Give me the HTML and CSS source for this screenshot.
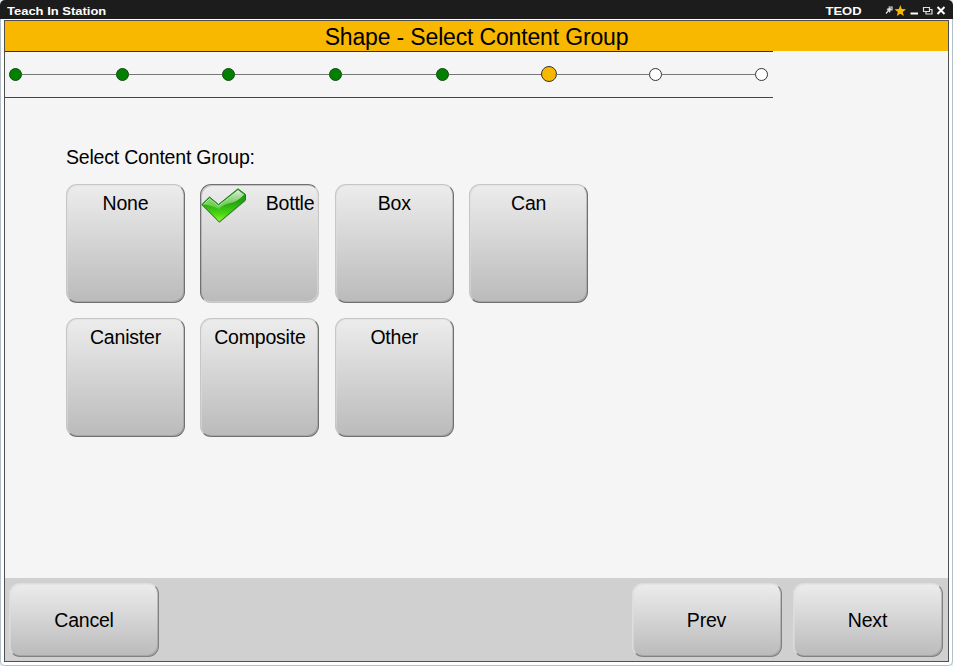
FILE: index.html
```html
<!DOCTYPE html>
<html lang="en">
<head>
<meta charset="utf-8">
<title>Teach In Station</title>
<link rel="stylesheet" href="styles.css">
</head>
<body>
<div class="window">
  <header class="titlebar">
    <span class="app-name">Teach In Station</span>
    <span class="station">TEOD</span>
    <svg class="controls" width="66" height="19" viewBox="0 0 66 19">
      <path d="M3.500 9L6 8 6.500 7 9 10 7.500 10.500 7 13z" fill="#ddd"/>
      <path d="M5.500 7h3.500v3.500M5.500 10.500l-2.500 3" fill="none" stroke="#ddd" stroke-width="1.200"/>
      <path d="M17.300 5l1.500 3.900 4.200.3-3.200 2.700 1 4.100-3.500-2.200-3.500 2.200 1-4.100-3.200-2.700 4.200-.3z" fill="#f8b800"/>
      <path d="M27.500 13.500h7.500" stroke="#fff" stroke-width="2"/>
      <path d="M40.500 7.500h6v4h-6zM43 11.500v2.500h6v-4.500h-2.500" fill="none" stroke="#ddd" stroke-width="1.200"/>
      <path d="M54.500 7l7 7M61.500 7l-7 7" stroke="#fff" stroke-width="2"/>
    </svg>
  </header>
  <div class="frame">
    <main class="screen">
      <h1 class="heading">Shape - Select Content Group</h1>
      <div class="progress">
        <i class="step done"></i><i class="line"></i><i class="step done"></i><i class="line"></i><i class="step done"></i><i class="line"></i><i class="step done"></i><i class="line"></i><i class="step done"></i><i class="line"></i><i class="step current"></i><i class="line"></i><i class="step"></i><i class="line"></i><i class="step"></i>
      </div>
      <section class="content">
        <h2 class="label">Select Content Group:</h2>
        <div class="tiles">
          <button class="btn tile">None</button>
          <button class="btn tile selected">
            <svg class="check" width="46" height="36" viewBox="0 0 46 36">
              <defs>
                <linearGradient id="leaf" x1="0" y1="0" x2="0" y2="1">
                  <stop offset="0" stop-color="#258b20"/>
                  <stop offset=".4" stop-color="#24a512"/>
                  <stop offset=".75" stop-color="#48d512"/>
                  <stop offset="1" stop-color="#9cf535"/>
                </linearGradient>
                <linearGradient id="gloss" x1="0" y1="0" x2="0" y2="1">
                  <stop offset="0" stop-color="#fff" stop-opacity=".85"/>
                  <stop offset="1" stop-color="#a0e878" stop-opacity=".4"/>
                </linearGradient>
              </defs>
              <path d="M1 17.500L8.500 10.500 18 18.500 37 2 45 8.500V13L18.500 35z" fill="#555" opacity=".35"/>
              <path d="M.8 16.500L8.500 9 17.500 16.500 37 .8 44.500 6.500V12L18.300 34z" fill="url(#leaf)" stroke="#168014" stroke-linejoin="round"/>
              <path d="M2.500 16.500L8.500 10.500 17.500 18 37 2.300 42.500 7Q37 14 27 15.500 20 18 18 21 10 17 2.500 16.500z" fill="url(#gloss)"/>
              <path d="M2.500 16.500L8.500 10.500 17.500 18 37 2.300 43 7" fill="none" stroke="#c5efb9" stroke-width=".8"/>
            </svg>
            <span>Bottle</span>
          </button>
          <button class="btn tile">Box</button>
          <button class="btn tile">Can</button>
          <button class="btn tile">Canister</button>
          <button class="btn tile">Composite</button>
          <button class="btn tile">Other</button>
        </div>
      </section>
      <footer class="footer">
        <button class="btn action">Cancel</button>
        <span class="spacer"></span>
        <button class="btn action">Prev</button>
        <button class="btn action">Next</button>
      </footer>
    </main>
  </div>
</div>
</body>
</html>
```
FILE: styles.css
```css
* { box-sizing: border-box; }
html { background: #e8ecef; }
body { margin: 0; font-family: "Liberation Sans", Arial, sans-serif; color: #000; }
.window { display: flex; flex-direction: column; width: 953px; height: 666px; }
.titlebar {
  display: flex; align-items: center; justify-content: space-between; height: 19px; flex: none;
  padding: 3px 4px 0 7px; background: #1c1c1c; color: #fff;
  border-radius: 5px 5px 0 0; font-size: 11px; font-weight: bold; line-height: 16px;
}
.app-name { transform: scaleX(1.18); transform-origin: left; margin-right: auto; }
.station { margin-right: 21px; transform: scaleX(1.18); transform-origin: right; }
.controls { margin-top: -3px; flex: none; }
.frame {
  flex: 1; min-height: 0; padding: 1px 3px 3px; background: #fff;
  border: 1px solid #b4c0c8; border-top: 0; border-radius: 0 0 5px 5px;
}
.screen {
  display: flex; flex-direction: column; height: 642px;
  border: 1px solid #505050; background: #f5f5f5;
}
.heading {
  margin: 0; height: 30px; flex: none; background: #f8b800;
  font-size: 23px; font-weight: normal; line-height: 32px; letter-spacing: -.16px; text-align: center;
}
.progress {
  display: flex; align-items: center; width: 768px; height: 47px; flex: none;
  padding: 0 4.800px 1px 4.300px; border-top: 1px solid #333; border-bottom: 1px solid #444;
}
.step {
  width: 13px; height: 13px; flex: none; border: 1px solid #333;
  border-radius: 50%; background: #fff;
}
.step.done { background: #008200; border-color: #124812; }
.step.current { width: 16px; height: 16px; margin: 0 -1.5px; background: #f8b800; }
.line { flex: 1; height: 1px; background: #777; }
.content { flex: 1; padding: 48px 0 0 61px; }
.label { margin: 0 0 15px; font-size: 19.500px; font-weight: normal; line-height: 23px; letter-spacing: -.2px; }
.tiles { display: grid; grid-template-columns: repeat(4, 119px); gap: 15.400px; }
.btn {
  padding: 0; border: 1px solid; border-color: #c6c6c6 #707070 #707070 #c6c6c6;
  box-shadow: inset 1px 1px #ddd8, inset -1px -1px #8886;
  border-radius: 11px; background: linear-gradient(#ededed, #bababa) border-box;
  color: #000; font: 19.500px "Liberation Sans", Arial, sans-serif; letter-spacing: -.2px;
}
.tile { display: flex; justify-content: center; height: 119px; padding-top: 7px; line-height: 23px; }
.tile.selected {
  justify-content: space-between; padding: 4px 4px 0 0; border-color: #707070 #c6c6c6 #c6c6c6 #707070;
  box-shadow: inset 1px 1px #8886, inset -1px -1px #ddd8;
}
.tile.selected span { padding-top: 3px; }
.check { flex: none; margin-top: -1px; }
.footer { display: flex; gap: 11px; height: 83px; flex: none; padding: 5px 5.500px 4px 4px; background: #d0d0d0; }
.spacer { flex: 1; }
.action { width: 150px; height: 74px; border-color: #ddd #808080 #808080 #ddd; }
```
